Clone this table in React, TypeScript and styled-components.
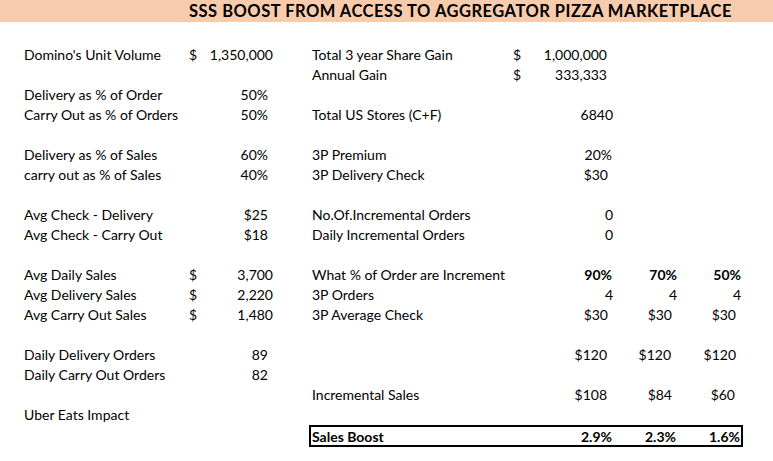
import React from "react";
import styled, { createGlobalStyle } from "styled-components";

const Global = createGlobalStyle`
  html, body { margin: 0; padding: 0; background: #ffffff; }
  body { font-family: Lato, "Open Sans", "Liberation Sans", sans-serif; color: #000; }
`;

const Sheet = styled.div`
  width: 773px;
  height: 461px;
  overflow: hidden;
  background: #fff;
  display: flex;
  flex-direction: column;
`;

const TitleBar = styled.div`
  height: 22px;
  background: #f8cbad;
  display: flex;
  align-items: center;
  padding-left: 189px;
  margin-bottom: 23px;
`;

const Title = styled.h1`
  margin: 0;
  font-size: 16.5px;
  font-weight: 700;
  letter-spacing: 0.5px;
  white-space: nowrap;
  line-height: 22px;
`;

const Row = styled.div`
  height: 20px;
  display: grid;
  grid-template-columns: 24px 165px 20px 64px 39px 201px 20px 80px 64px 64px;
  align-items: center;
  font-size: 14px;
  line-height: 20px;
  white-space: nowrap;
`;

const Label = styled.div<{ $col: number; $bold?: boolean }>`
  grid-column: ${(p) => p.$col};
  font-weight: ${(p) => (p.$bold ? 700 : 400)};
  overflow: visible;
`;

const Dollar = styled.div<{ $col: number }>`
  grid-column: ${(p) => p.$col};
`;

const Value = styled.div<{ $col: number; $pad?: number; $bold?: boolean }>`
  grid-column: ${(p) => p.$col};
  text-align: right;
  padding-right: ${(p) => p.$pad ?? 0}px;
  font-weight: ${(p) => (p.$bold ? 700 : 400)};
`;

const BoostBox = styled.div`
  grid-column: 6 / 11;
  margin-left: -3px;
  margin-right: -2px;
  height: 22px;
  box-sizing: border-box;
  border: 2px solid #000;
  display: grid;
  grid-template-columns: 222px 80px 64px 64px;
  align-items: center;
  font-weight: 700;
`;

const BoxLabel = styled.div`
  padding-left: 1px;
`;

type Cell =
  | { kind: "label"; col: number; text: string; bold?: boolean }
  | { kind: "dollar"; col: number }
  | { kind: "value"; col: number; text: string; pad?: number; bold?: boolean };

const L = (col: number, text: string, bold?: boolean): Cell => ({ kind: "label", col, text, bold });
const D = (col: number): Cell => ({ kind: "dollar", col });
const V = (col: number, text: string, pad?: number, bold?: boolean): Cell => ({ kind: "value", col, text, pad, bold });

const rows: Cell[][] = [
  [L(2, "Domino's Unit Volume"), D(3), V(4, "1,350,000"), L(6, "Total 3 year Share Gain"), D(7), V(8, "1,000,000", 6)],
  [L(6, "Annual Gain"), D(7), V(8, "333,333", 6)],
  [L(2, "Delivery as % of Order"), V(4, "50%", 5)],
  [L(2, "Carry Out as % of Orders"), V(4, "50%", 5), L(6, "Total US Stores (C+F)"), V(8, "6840")],
  [],
  [L(2, "Delivery as % of Sales"), V(4, "60%", 5), L(6, "3P Premium"), V(8, "20%", 1)],
  [L(2, "carry out as % of Sales"), V(4, "40%", 5), L(6, "3P Delivery Check"), V(8, "$30", 5)],
  [],
  [L(2, "Avg Check - Delivery"), V(4, "$25", 5), L(6, "No.Of.Incremental Orders"), V(8, "0")],
  [L(2, "Avg Check - Carry Out"), V(4, "$18", 5), L(6, "Daily Incremental Orders"), V(8, "0")],
  [],
  [L(2, "Avg Daily Sales"), D(3), V(4, "3,700"), L(6, "What % of Order are Increment"), V(8, "90%", 1, true), V(9, "70%", 0, true), V(10, "50%", 0, true)],
  [L(2, "Avg Delivery Sales"), D(3), V(4, "2,220"), L(6, "3P Orders"), V(8, "4"), V(9, "4"), V(10, "4")],
  [L(2, "Avg Carry Out Sales"), D(3), V(4, "1,480"), L(6, "3P Average Check"), V(8, "$30", 5), V(9, "$30", 5), V(10, "$30", 5)],
  [],
  [L(2, "Daily Delivery Orders"), V(4, "89", 5), V(8, "$120", 6), V(9, "$120", 6), V(10, "$120", 5)],
  [L(2, "Daily Carry Out Orders"), V(4, "82", 5)],
  [L(6, "Incremental Sales"), V(8, "$108", 6), V(9, "$84", 5), V(10, "$60", 6)],
  [L(2, "Uber Eats Impact")],
];

function renderCell(c: Cell, i: number) {
  if (c.kind === "label") return <Label key={i} $col={c.col} $bold={c.bold}>{c.text}</Label>;
  if (c.kind === "dollar") return <Dollar key={i} $col={c.col}>$</Dollar>;
  return <Value key={i} $col={c.col} $pad={c.pad} $bold={c.bold}>{c.text}</Value>;
}

export default function App() {
  return (
    <>
      <Global />
      <Sheet>
        <TitleBar>
          <Title>SSS BOOST FROM ACCESS TO AGGREGATOR PIZZA MARKETPLACE</Title>
        </TitleBar>
        {rows.map((r, i) => (
          <Row key={i}>{r.map(renderCell)}</Row>
        ))}
        <Row>
          <BoostBox>
            <BoxLabel>Sales Boost</BoxLabel>
            <Value $col={2} $bold $pad={1}>2.9%</Value>
            <Value $col={3} $bold $pad={1}>2.3%</Value>
            <Value $col={4} $bold $pad={1}>1.6%</Value>
          </BoostBox>
        </Row>
      </Sheet>
    </>
  );
}
